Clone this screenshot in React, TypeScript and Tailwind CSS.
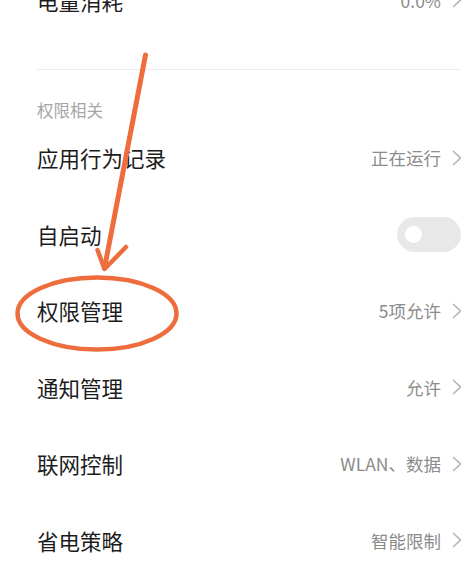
import React from "react";

const rows = [
  { label: "应用行为记录", value: "正在运行" },
  { label: "自启动", toggle: true },
  { label: "权限管理", value: "5项允许" },
  { label: "通知管理", value: "允许" },
  { label: "联网控制", value: "WLAN、数据" },
  { label: "省电策略", value: "智能限制" },
];

const Chevron = () => (
  <svg width="9" height="16" viewBox="0 0 9 16" className="shrink-0">
    <path d="M1 1 L8.5 8 L1 15" fill="none" stroke="#b5b5b5" strokeWidth="1.6" />
  </svg>
);

const Row = ({ label, value, toggle }: { label: string; value?: string; toggle?: boolean }) => (
  <div className="h-[76.5px] flex items-center justify-between pl-[37px]">
    <span className="text-[21.5px] text-[#1c1c1c] leading-none">{label}</span>
    {toggle ? (
      <div className="w-[64px] h-[35px] rounded-full bg-[#e8e8e8] flex items-center pl-[8px]">
        <div className="w-[17px] h-[17px] rounded-full bg-white" />
      </div>
    ) : (
      <div className="flex items-center gap-[11px]">
        <span className="text-[17.5px] text-[#8c8c8c] leading-none">{value}</span>
        <Chevron />
      </div>
    )}
  </div>
);

export default function App() {
  return (
    <div
      className="relative w-[461px] h-[567px] overflow-hidden bg-white"
      style={{ fontFamily: '"Noto Sans CJK SC", "Noto Sans", sans-serif' }}
    >
      <div className="-mt-[38px]">
        <Row label="电量消耗" value="0.0%" />
      </div>
      <div className="pt-[30px] pl-[37px]">
        <div className="border-t border-[#ececec]" />
      </div>
      <div className="pl-[37px] pt-[32px] h-[50px] text-[16.5px] leading-none text-[#a6a6a6]">
        权限相关
      </div>
      {rows.map((r) => (
        <Row key={r.label} {...r} />
      ))}

      {/* annotation overlay */}
      <svg
        className="absolute inset-0 pointer-events-none"
        width="461"
        height="567"
        viewBox="0 0 461 567"
      >
        <g stroke="#ee6d3d" fill="none" strokeLinecap="round">
          <path d="M145.5 55 Q125 160 104.5 268" strokeWidth="5" />
          <path d="M97.5 250 L104.5 269 L126 247" strokeWidth="4.5" strokeLinejoin="round" />
          <ellipse cx="97" cy="313.5" rx="79.5" ry="36" strokeWidth="4.5" />
        </g>
      </svg>
    </div>
  );
}
